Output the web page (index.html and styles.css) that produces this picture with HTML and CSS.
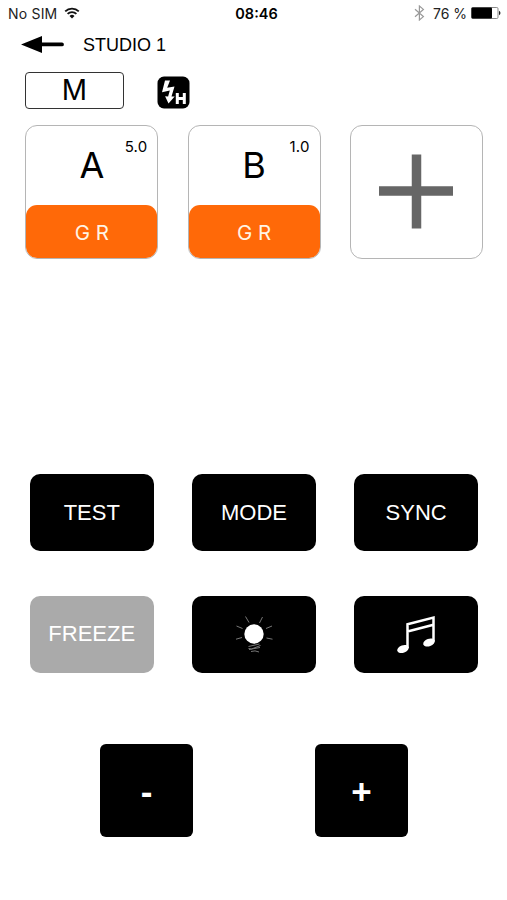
FILE: index.html
```html
<!DOCTYPE html>
<html lang="en">
<head>
    <meta charset="UTF-8">
    <meta name="viewport" content="width=device-width, initial-scale=1.0">
    <title>Studio 1</title>
    <link rel="stylesheet" href="styles.css">
</head>
<body>

    <!-- Status bar -->
    <div class="status-bar">
        <div class="status-left">
            <span>No SIM</span>
            <svg class="wifi" width="16" height="12" viewBox="0 0 16 12">
                <path d="M1.2 4.4a9.6 9.6 0 0 1 13.6 0M3.6 6.9a6.2 6.2 0 0 1 8.8 0" fill="none" stroke="#111" stroke-width="1.8"/>
                <path d="M8 11.6L5.5 9a3.5 3.5 0 0 1 5 0z" fill="#111"/>
            </svg>
        </div>
        <div class="status-time">08:46</div>
        <div class="status-right">
            <svg class="bluetooth" width="11" height="16" viewBox="0 0 11 16">
                <path d="M1 4.2l8.4 7.4L5.4 15V1l4 3.4L1 11.8" fill="none" stroke="#999" stroke-width="1.2"/>
            </svg>
            <span>76 %</span>
            <svg class="battery" width="30" height="12" viewBox="0 0 30 12">
                <rect x="0.5" y="0.5" width="26.5" height="11" rx="1.2" fill="#fff" stroke="#888"/>
                <rect x="0.5" y="0.5" width="20.5" height="11" rx="1" fill="#000"/>
                <path d="M28 3.8c2 .8 2 3.6 0 4.4z" fill="#222"/>
            </svg>
        </div>
    </div>

    <!-- Title -->
    <div class="nav-bar">
        <svg class="back-arrow" width="43" height="18" viewBox="0 0 43 18">
            <path d="M0 8.500L21 0V6.500H41a1.500 1.500 0 0 1 0 3.800H21v6.700z" fill="#000"/>
        </svg>
        <span class="title">STUDIO 1</span>
    </div>

    <div class="mode-row">
        <div class="mode-box">M</div>
        <svg class="flash-icon" width="33" height="33" viewBox="0 0 33 33">
            <rect x="0.5" y="0.5" width="32" height="32" rx="6.500" fill="#000"/>
            <path d="M8 4.500h5l-2.800 7.200 7.300-1.200-3 10h3.200l-6.200 7-3.400-7.300 3 .3 1.700-6-7.800 1.800z" fill="#fff"/>
            <path d="M20.300 17v11M27.300 17v11M20 22.500h7" fill="none" stroke="#fff" stroke-width="3"/>
        </svg>
    </div>

    <!-- Groups -->
    <div class="groups">
        <div class="group-card">
            <span class="group-power">5.0</span>
            <span class="group-name">A</span>
            <div class="group-type">G R</div>
        </div>
        <div class="group-card">
            <span class="group-power">1.0</span>
            <span class="group-name">B</span>
            <div class="group-type">G R</div>
        </div>
        <div class="group-card add-card">
            <svg width="74" height="75" viewBox="0 0 74 75">
                <path d="M37.500 0.500v74M0 37h74" stroke="#666" stroke-width="9.500"/>
            </svg>
        </div>
    </div>

    <!-- Control buttons -->
    <div class="controls">
        <button class="control-btn">TEST</button>
        <button class="control-btn">MODE</button>
        <button class="control-btn">SYNC</button>
        <button class="control-btn disabled">FREEZE</button>
        <button class="control-btn">
            <svg class="bulb" width="40" height="40" viewBox="0 0 40 40">
                <circle cx="20" cy="20" r="9.700" fill="#fff"/>
                <g fill="none" stroke="#777" stroke-width="1">
                    <path d="M11.500 2.500l3.500 6M28.500 3l-3 6M2.500 12l6 2.500M38 12l-6 2.500M2 25.200l6-1.700M38.500 25.200l-6-1.200"/>
                    <path d="M14.500 32.500l11-2.500M14.500 34.500l3 .5 9-3.500M15 35.500l11-2M17 37.500q4-1.500 8 .5"/>
                </g>
            </svg>
        </button>
        <button class="control-btn">
            <svg class="note" width="39" height="39" viewBox="0 0 39 39">
                <path d="M10.500 33V9.300L36.500 2.500V26.500M10.500 16.500L36.500 9.700" fill="none" stroke="#fff" stroke-width="2.500"/>
                <ellipse cx="6" cy="34" rx="6" ry="3.700" transform="rotate(-20 6 34)" fill="#fff"/>
                <ellipse cx="32" cy="27.500" rx="6" ry="3.700" transform="rotate(-20 32 27.500)" fill="#fff"/>
            </svg>
        </button>
    </div>

    <div class="steppers">
        <button class="step-btn">-</button>
        <button class="step-btn">+</button>
    </div>

</body>
</html>
```

FILE: styles.css
```css
* {
    box-sizing: border-box;
}

body {
    margin: 0;
    width: 507px;
    height: 900px;
    overflow: hidden;
    background-color: #fff;
    color: #000;
    font-family: "Liberation Sans", Arial, sans-serif;
}

svg {
    display: block;
}

button {
    padding: 0;
    border: none;
    font-family: inherit;
    cursor: pointer;
}

/* Status bar */
.status-bar {
    display: grid;
    grid-template-columns: 1fr auto 1fr;
    align-items: center;
    height: 28px;
    padding: 0 6px 2px 8px;
    font-family: Inter, sans-serif;
    font-size: 14px;
    color: #222;
}

.status-left,
.status-right {
    display: flex;
    align-items: center;
}

.status-left {
    gap: 7px;
    letter-spacing: 0.2px;
}

.status-right {
    justify-content: flex-end;
}

.status-time {
    padding-left: 4px;
    font-weight: 600;
    font-size: 14.5px;
    color: #000;
}

.bluetooth {
    margin-right: 8px;
}

.battery {
    margin-left: 4px;
}

/* Title row */
.nav-bar {
    display: flex;
    align-items: center;
    gap: 19px;
    height: 34px;
    padding-left: 21px;
}

.title {
    font-size: 18px;
}

/* Mode and flash sync */
.mode-row {
    display: flex;
    align-items: center;
    gap: 33px;
    height: 38px;
    margin-top: 9px;
    padding-left: 25px;
}

.mode-box {
    display: flex;
    align-items: center;
    justify-content: center;
    width: 99px;
    height: 37px;
    border: 1.5px solid #333;
    border-radius: 4px;
    font-family: Inter, sans-serif;
    font-size: 28px;
}

.flash-icon {
    margin-top: 4px;
}

/* Group cards */
.groups {
    display: grid;
    grid-template-columns: repeat(3, 133px);
    gap: 29.2px;
    margin-top: 16px;
    padding-left: 25.4px;
}

.group-card {
    display: flex;
    flex-direction: column;
    height: 133.5px;
    border: 1.5px solid #b5b5b5;
    border-radius: 12px;
    overflow: hidden;
    font-family: Inter, sans-serif;
    text-align: center;
}

.group-power {
    padding: 12px 10px 0 0;
    font-size: 15px;
    line-height: 17px;
    letter-spacing: 0.2px;
    text-align: right;
}

.group-name {
    font-size: 36px;
    line-height: 20px;
}

.group-type {
    height: 53px;
    margin-top: auto;
    border-radius: 11px;
    background-color: #ff6908;
    color: #fff4e4;
    font-size: 20.5px;
    line-height: 55px;
}

.add-card {
    align-items: center;
    justify-content: center;
}

/* Control buttons */
.controls {
    display: grid;
    grid-template-columns: repeat(3, 123.5px);
    gap: 44.5px 38.7px;
    margin-top: 215.5px;
    padding-left: 30px;
}

.control-btn {
    display: flex;
    align-items: center;
    justify-content: center;
    height: 77px;
    border-radius: 10px;
    background-color: #000;
    color: #fff;
    font-size: 22px;
}

.control-btn.disabled {
    background-color: #aaa;
}

/* Plus and minus */
.steppers {
    display: flex;
    gap: 122px;
    margin-top: 71px;
    padding-left: 100px;
}

.step-btn {
    width: 93px;
    height: 93px;
    padding-top: 3px;
    border-radius: 6px;
    background-color: #000;
    color: #fff;
    font-size: 35px;
    font-weight: bold;
}
```
